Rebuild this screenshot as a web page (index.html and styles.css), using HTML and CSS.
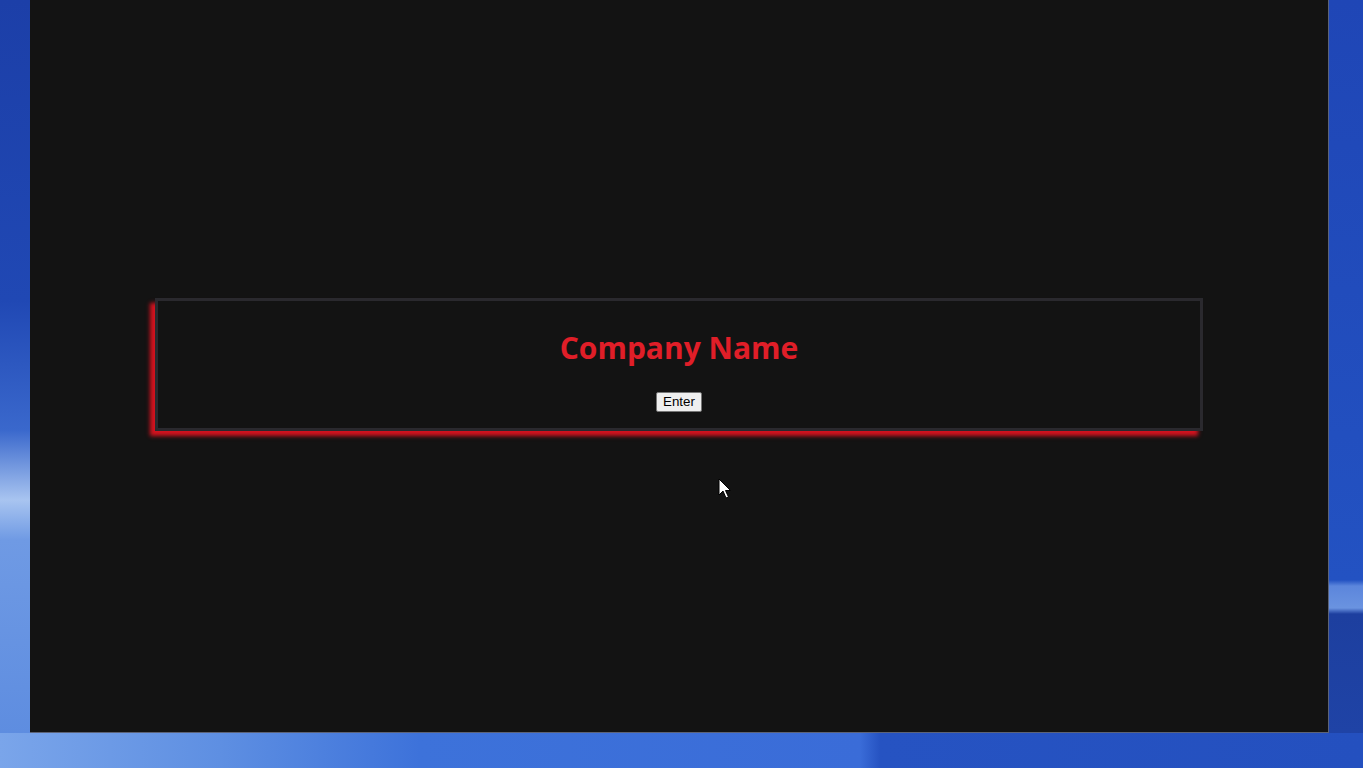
FILE: index.html
```html
<!DOCTYPE html>
<html lang="en">
<head>
<meta charset="utf-8">
<title>Company Name</title>
<link rel="stylesheet" href="styles.css">
</head>
<body>
  <div class="desktop">
    <main class="window">
      <section class="card">
        <h1 class="title">Company Name</h1>
        <button class="enter" type="button">Enter</button>
      </section>
    </main>
    <svg class="cursor" width="14" height="22" viewBox="0 0 14 22" aria-hidden="true">
      <path d="M1 1 L1 17 L5 13 L8 20 L10.5 19 L7.5 12.5 L12.5 12.5 Z" fill="#fff" stroke="#000" stroke-width="1" stroke-linejoin="round"/>
    </svg>
  </div>
</body>
</html>
```
FILE: styles.css
```css
html, body {
  margin: 0;
  padding: 0;
  height: 100%;
}

body {
  font-family: "Open Sans", "Liberation Sans", Arial, sans-serif;
  overflow: hidden;
}

.desktop {
  position: relative;
  width: 1363px;
  height: 768px;
  padding: 0 34px 35px 30px;
  box-sizing: border-box;
  background-color: #2550c0;
  background-image:
    linear-gradient(180deg, #1c3fa8 0px, #2048b4 300px, #3a68cc 430px, #a8c4f0 500px, #6f9ae4 540px, #5e8de0 733px),
    linear-gradient(180deg, #1f46b6 0px, #2352c2 580px, #5c86dc 586px, #6a93e0 608px, #1d3f9f 614px, #1f43a6 733px),
    linear-gradient(90deg, #7aa5ea 0px, #5e8fe2 220px, #3d72da 420px, #3a6cd8 860px, #2653c2 880px, #2450bf 1363px);
  background-repeat: no-repeat;
  background-size: 30px 733px, 34px 733px, 100% 35px;
  background-position: 0 0, 100% 0, 0 733px;
}

.window {
  height: 733px;
  background: #131313;
  border-right: 1px solid #5c6378;
  border-bottom: 1px solid #5c6378;
  box-sizing: border-box;
  display: flex;
  align-items: center;
  justify-content: center;
  padding-bottom: 4px;
}

.card {
  width: 1048px;
  height: 133px;
  box-sizing: border-box;
  border: 3px solid #2a292e;
  background: #131313;
  box-shadow: -5px 5px 4px #d3131f;
  display: flex;
  flex-direction: column;
  align-items: center;
  padding-top: 25px;
}

.title {
  margin: 0;
  color: #e01e28;
  font-family: "Open Sans", sans-serif;
  font-weight: 700;
  font-size: 30px;
  line-height: 44px;
}

.enter {
  margin-top: 22px;
  font-family: "Liberation Sans", Arial, sans-serif;
  font-size: 13.3333px;
  line-height: 16px;
  padding: 1px 6px;
  color: #000;
  background: #efefef;
  border: 1px solid #767676;
  border-radius: 2px;
}

.cursor {
  position: absolute;
  left: 718px;
  top: 478px;
}
```
